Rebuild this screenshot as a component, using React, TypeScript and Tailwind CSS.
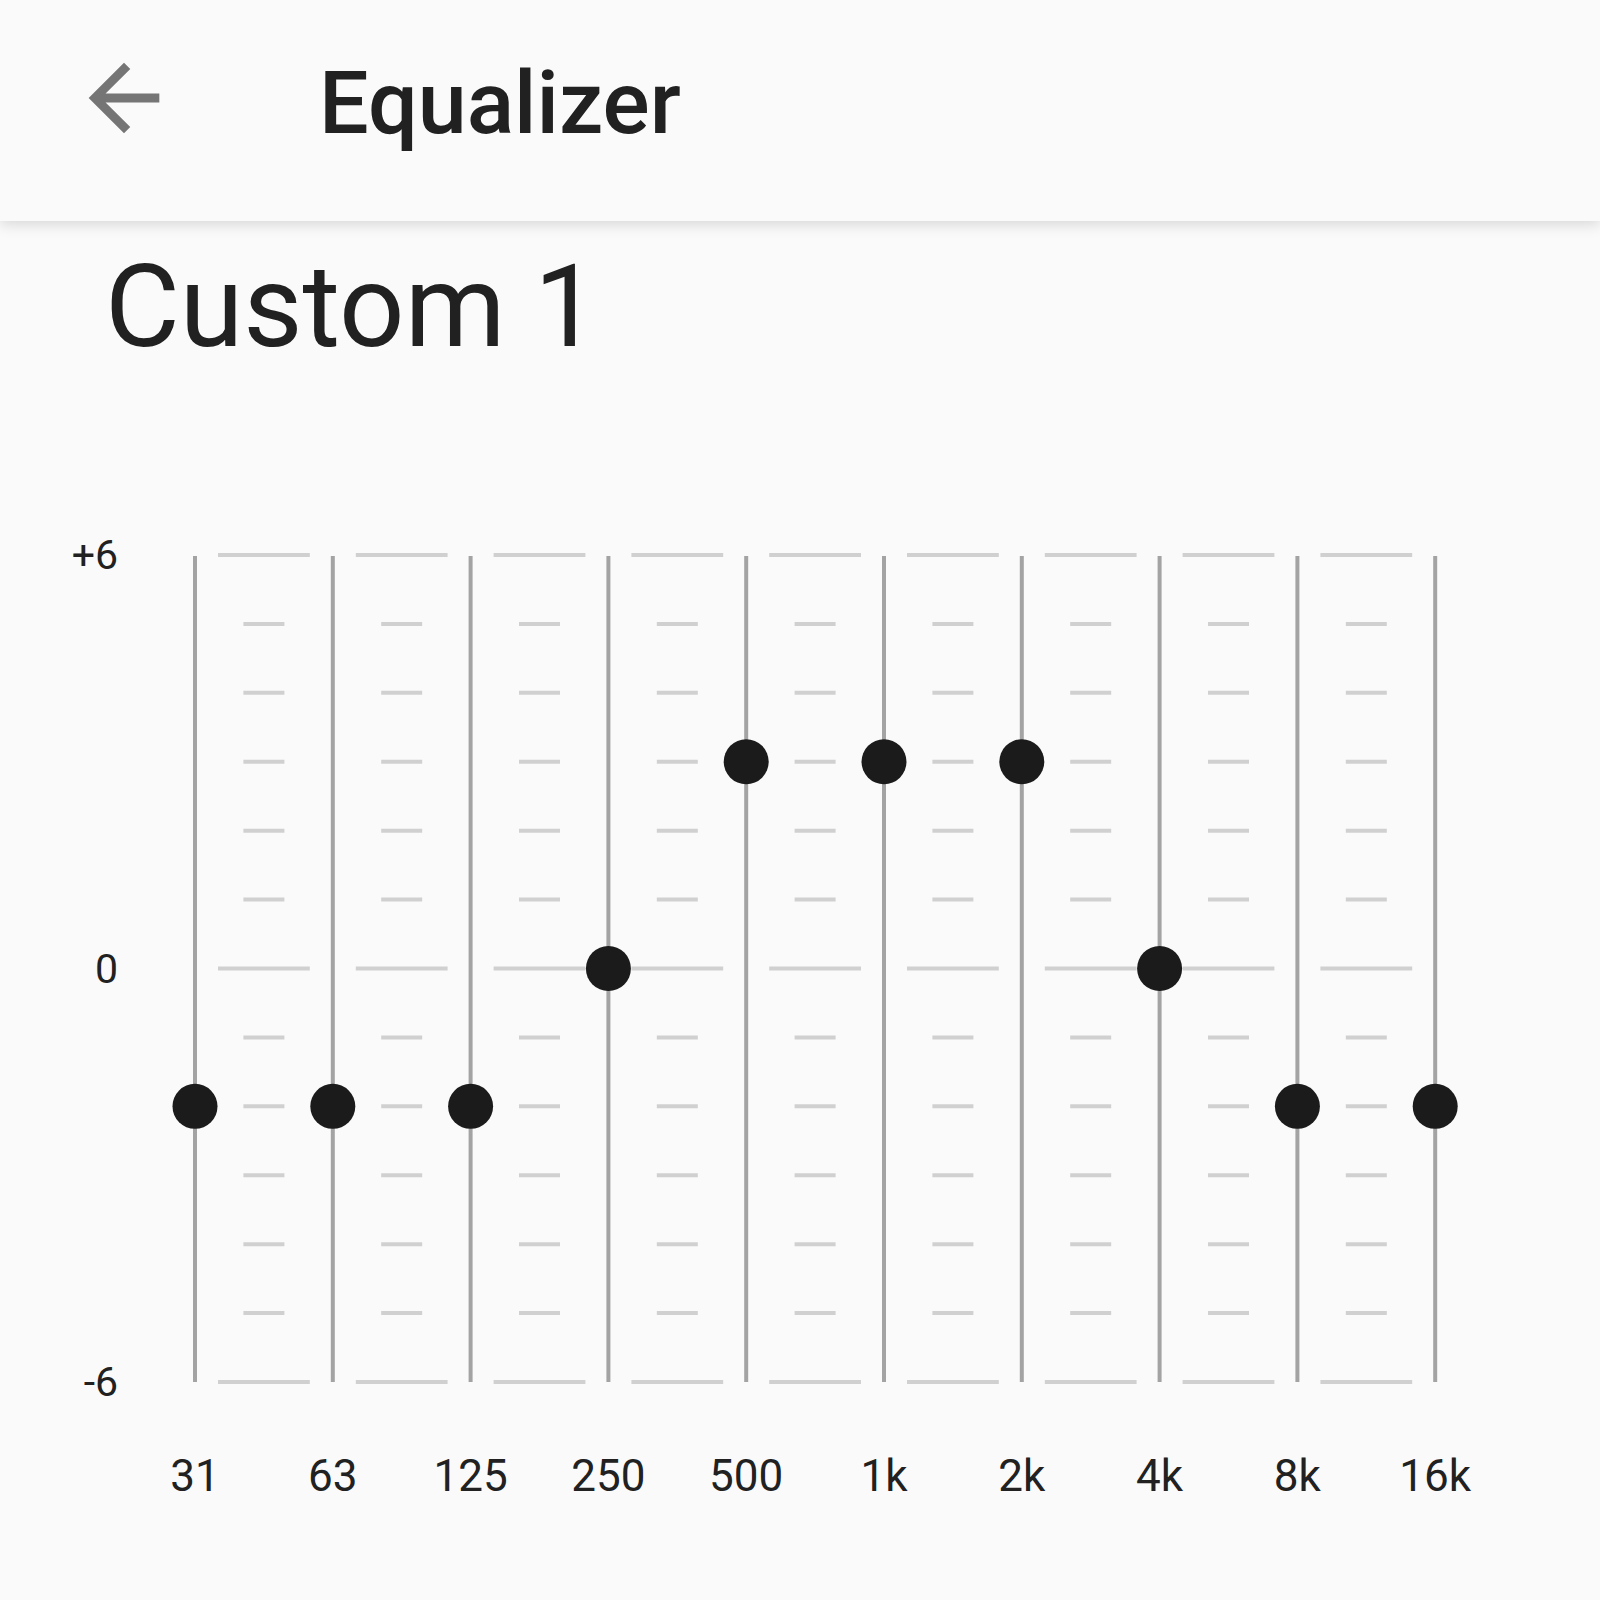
import React from "react";

const LINE_X0 = 77; // svg coords (svg left = 118px)
const STEP_X = 137.8;
const ROW_Y0 = 15; // svg top = 540px
const STEP_Y = 68.92;
const values = [-2, -2, -2, 0, 3, 3, 3, 0, -2, -2];
const freqs = ["31", "63", "125", "250", "500", "1k", "2k", "4k", "8k", "16k"];

function Chart() {
  const rows = Array.from({ length: 13 }, (_, i) => i);
  const gaps = Array.from({ length: 9 }, (_, i) => i);
  const lineTop = ROW_Y0 + 1;
  const lineBottom = ROW_Y0 + 12 * STEP_Y;
  return (
    <svg width={1482} height={860} className="block">
      {gaps.map((g) => {
        const lx = LINE_X0 + g * STEP_X;
        const cx = lx + STEP_X / 2;
        return rows.map((r) => {
          const y = ROW_Y0 + r * STEP_Y;
          const long = r === 0 || r === 6 || r === 12;
          const x1 = long ? lx + 23 : cx - 20.5;
          const x2 = long ? lx + STEP_X - 23 : cx + 20.5;
          return (
            <line
              key={`${g}-${r}`}
              x1={x1}
              x2={x2}
              y1={y}
              y2={y}
              stroke="#d0d0d0"
              strokeWidth={4}
            />
          );
        });
      })}
      {values.map((v, i) => {
        const x = LINE_X0 + i * STEP_X;
        return (
          <line
            key={`v${i}`}
            x1={x}
            x2={x}
            y1={lineTop}
            y2={lineBottom}
            stroke="#a3a3a3"
            strokeWidth={4}
          />
        );
      })}
      {values.map((v, i) => {
        const x = LINE_X0 + i * STEP_X;
        const y = ROW_Y0 + (6 - v) * STEP_Y;
        return <circle key={`c${i}`} cx={x} cy={y} r={22.5} fill="#1b1b1b" />;
      })}
    </svg>
  );
}

export default function App() {
  return (
    <div
      className="w-[1600px] h-[1600px] bg-[#fafafa] text-[#212121] overflow-hidden"
      style={{ fontFamily: "Roboto, 'Noto Sans', sans-serif" }}
    >
      <header className="h-[221px] bg-[#fafafa] shadow-[0_3px_14px_rgba(0,0,0,0.15)] flex items-start pt-[45px] pl-[71px] relative z-10">
        <svg width={106} height={106} viewBox="0 0 24 24" className="shrink-0">
          <path
            d="M20 11H7.83l5.59-5.59L12 4l-8 8 8 8 1.41-1.41L7.83 13H20v-2z"
            fill="#757575"
          />
        </svg>
        <h1 className="ml-[142px] mt-[14px] text-[88px] leading-none font-medium">
          Equalizer
        </h1>
      </header>
      <div className="pl-[105px] mt-[28px] text-[115px] leading-none font-normal">
        Custom 1
      </div>
      <div className="flex mt-[176px]">
        <div className="w-[118px] h-[860px] flex flex-col items-end -mt-[2px] gap-[379.5px] text-[41px] leading-[34px]">
          <div>+6</div>
          <div>0</div>
          <div>-6</div>
        </div>
        <Chart />
      </div>
      <div className="flex pl-[126.1px] mt-[54px] text-[44px] leading-[44px]">
        {freqs.map((f) => (
          <div key={f} className="w-[137.8px] text-center">
            {f}
          </div>
        ))}
      </div>
    </div>
  );
}
